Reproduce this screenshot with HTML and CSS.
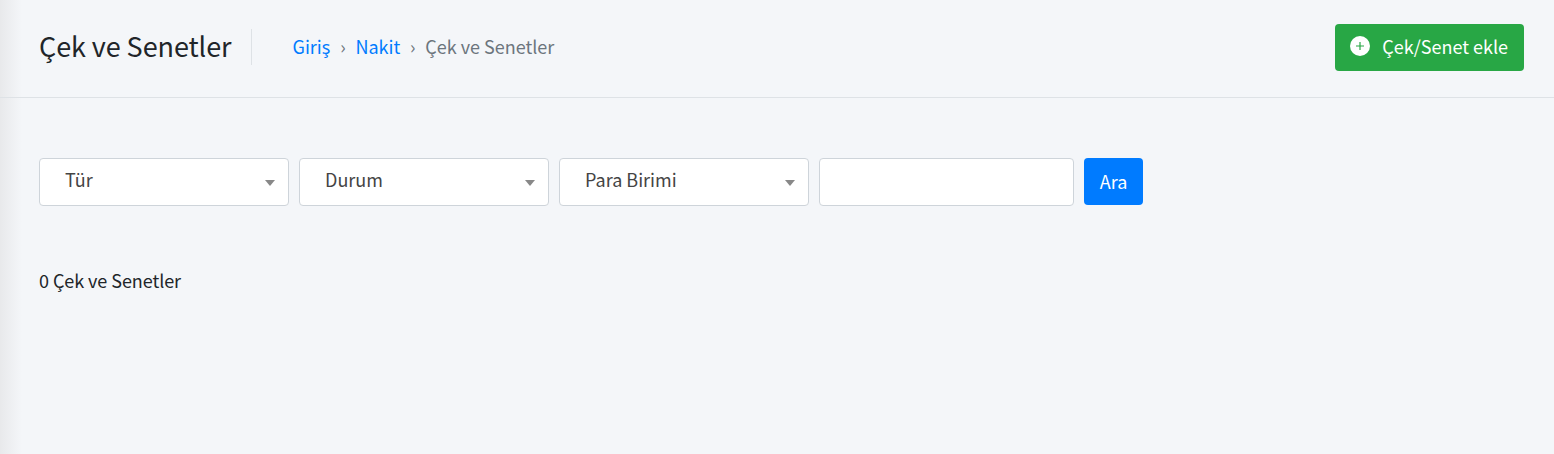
FILE: index.html
```html
<!DOCTYPE html>
<html lang="tr">
<head>
  <meta charset="UTF-8" />
  <title>Çek ve Senetler</title>
  <link rel="stylesheet" href="styles.css">
</head>
<body>
  <div class="page-header">
    <div class="page-heading">
      <h1>Çek ve Senetler</h1>
      <div class="breadcrumb">
        <a href="#">Giriş</a>
        <span class="separator">›</span>
        <a href="#">Nakit</a>
        <span class="separator">›</span>
        <span class="current">Çek ve Senetler</span>
      </div>
    </div>
    <button class="btn-add">
      <svg class="button-icon" viewBox="0 0 20 20" xmlns="http://www.w3.org/2000/svg">
        <circle cx="10" cy="10" r="10" fill="#ffffff"/>
        <path d="M10 6V14M6 10H14" stroke="#28a745" stroke-width="1.2" fill="none"/>
      </svg>
      Çek/Senet ekle
    </button>
  </div>

  <div class="content">
    <form class="filters">
      <div class="select-box"><span>Tür</span><i class="caret"></i></div>
      <div class="select-box"><span>Durum</span><i class="caret"></i></div>
      <div class="select-box"><span>Para Birimi</span><i class="caret"></i></div>
      <input class="search-input" type="text" />
      <button class="btn-search" type="button">Ara</button>
    </form>
    <p class="result-count">0 Çek ve Senetler</p>
  </div>
</body>
</html>
```

FILE: styles.css
```css
:root {
  --primary: #007bff;
  --success: #28a745;
  --text: #212529;
  --text-light: #6c757d;
  --background: #f4f6f9;
  --border: #ced4da;
  --line: #dee2e6;
}

* {
  box-sizing: border-box;
  margin: 0;
  padding: 0;
}

body {
  font-family: "Noto Sans CJK SC", "Noto Sans", sans-serif;
  font-size: 18px;
  line-height: 27px;
  height: 454px;
  overflow: hidden;
  color: var(--text);
  background: linear-gradient(to right, #e8e9eb 0, #f4f6f9 22px);
}

.page-header {
  display: flex;
  align-items: center;
  justify-content: space-between;
  height: 98px;
  padding: 0 30px 3px 39px;
  border-bottom: 1px solid var(--line);
}

.page-heading {
  display: flex;
  align-items: center;
}

h1 {
  font-size: 27px;
  line-height: 34px;
  font-weight: 400;
  letter-spacing: -0.07px;
  padding-right: 19px;
  padding-bottom: 2px;
  border-right: 1px solid var(--line);
}

.breadcrumb {
  display: flex;
  align-items: center;
  margin-left: 41px;
  margin-bottom: 2px;
}

.breadcrumb a {
  color: var(--primary);
  text-decoration: none;
}

.separator {
  width: 25px;
  text-align: center;
  color: var(--text-light);
}

.current {
  color: var(--text-light);
}

.btn-add {
  display: flex;
  align-items: center;
  gap: 12px;
  height: 47px;
  padding: 0 16px 2px 15px;
  background-color: var(--success);
  color: #ffffff;
  font-family: inherit;
  font-size: 18px;
  border: none;
  border-radius: 4px;
}

.button-icon {
  width: 20px;
  height: 20px;
}

.content {
  padding: 60px 30px 0 39px;
}

.filters {
  display: flex;
  align-items: flex-start;
  gap: 10px;
}

.select-box {
  display: flex;
  align-items: center;
  justify-content: space-between;
  width: 250px;
  height: 48px;
  padding: 0 13px 0 25px;
  background-color: #ffffff;
  border: 1px solid var(--border);
  border-radius: 4px;
  color: #444444;
}

.select-box span {
  margin-bottom: 6px;
}

.caret {
  width: 0;
  height: 0;
  border-left: 5px solid transparent;
  border-right: 5px solid transparent;
  border-top: 6px solid #888888;
  margin-top: 2px;
}

.search-input {
  width: 255px;
  height: 48px;
  background-color: #ffffff;
  border: 1px solid var(--border);
  border-radius: 4px;
}

.btn-search {
  width: 59px;
  height: 47px;
  padding-bottom: 2px;
  background-color: var(--primary);
  color: #ffffff;
  font-family: inherit;
  font-size: 18px;
  border: none;
  border-radius: 4px;
}

.result-count {
  margin-top: 61px;
  letter-spacing: -0.06px;
}
```
